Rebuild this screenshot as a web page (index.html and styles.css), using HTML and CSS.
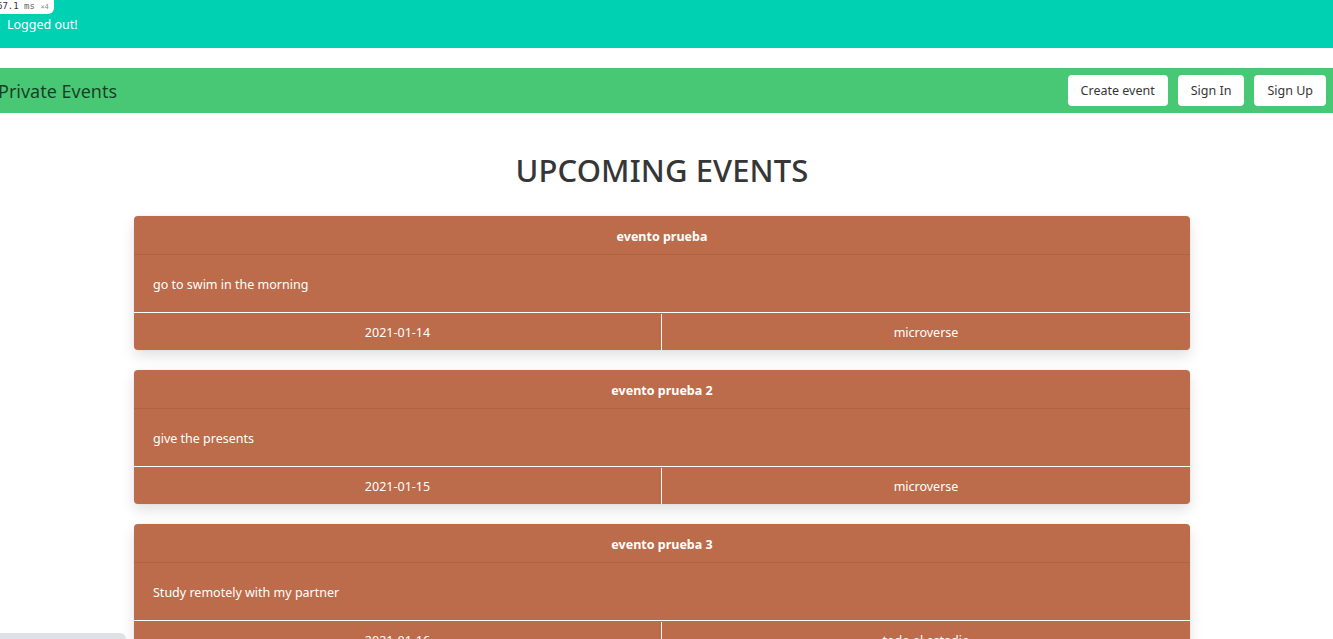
FILE: index.html
```html
<!DOCTYPE html>
<html lang="en">
<head>
<meta charset="utf-8">
<title>Private Events</title>
<link rel="stylesheet" href="styles.css">
</head>
<body>
<div class="profiler"><span class="ms">67.1</span> ms <span class="x">×4</span></div>
<div class="notice">Logged out!</div>
<nav class="navbar">
  <a class="brand" href="#">Private Events</a>
  <div class="nav-buttons">
    <a class="btn" href="#">Create event</a>
    <a class="btn" href="#">Sign In</a>
    <a class="btn" href="#">Sign Up</a>
  </div>
</nav>
<main class="main">
  <h1 class="title">UPCOMING EVENTS</h1>
  <div class="events">
    <article class="card">
      <header class="card-head">evento prueba</header>
      <div class="card-body">go to swim in the morning</div>
      <footer class="card-foot"><span>2021-01-14</span><span>microverse</span></footer>
    </article>
    <article class="card">
      <header class="card-head">evento prueba 2</header>
      <div class="card-body">give the presents</div>
      <footer class="card-foot"><span>2021-01-15</span><span>microverse</span></footer>
    </article>
    <article class="card">
      <header class="card-head">evento prueba 3</header>
      <div class="card-body">Study remotely with my partner</div>
      <footer class="card-foot"><span>2021-01-16</span><span>todo el estadio</span></footer>
    </article>
  </div>
</main>
<div class="console-tab"></div>
</body>
</html>
```
FILE: styles.css
```css
* { box-sizing: border-box; }
html, body { margin: 0; padding: 0; }
body {
  font-family: "Noto Sans", "Open Sans", sans-serif;
  color: #363636;
  background: #fff;
  overflow: hidden;
}
.profiler {
  position: absolute;
  top: 0;
  left: -3px;
  background: #fff;
  border-radius: 0 0 6px 0;
  padding: 0 5px 1px 0;
  font-family: "DejaVu Sans Mono", monospace;
  font-size: 9px;
  line-height: 12px;
  color: #666;
  z-index: 2;
}
.profiler .ms { color: #333; }
.profiler .x { color: #888; font-size: 7px; }
.notice {
  background: #00d1b2;
  color: #fff;
  height: 48px;
  padding: 16px 0 0 7px;
  font-size: 12.5px;
  line-height: 17px;
}
.navbar {
  margin-top: 20px;
  background: #48c774;
  height: 45px;
  display: flex;
  align-items: center;
  justify-content: space-between;
  padding: 0 7px 0 0;
}
.brand {
  margin-left: -2px;
  font-size: 18px;
  color: rgba(0,0,0,.7);
  text-decoration: none;
  padding-top: 1px;
}
.nav-buttons { display: flex; gap: 10px; }
.btn {
  background: #fff;
  color: #363636;
  text-decoration: none;
  border-radius: 4px;
  height: 31px;
  display: flex;
  align-items: center;
  padding: 0 13px;
  font-size: 12.5px;
}
.main { padding-right: 9px; }
.title {
  margin: 0;
  padding-top: 37px;
  text-align: center;
  font-size: 31px;
  font-weight: 500;
  line-height: 40px;
  color: #363636;
  letter-spacing: 0.1px;
}
.events {
  width: 1056px;
  margin: 26px auto 0;
  display: flex;
  flex-direction: column;
  gap: 20px;
}
.card {
  background: #bc6c4a;
  color: #fff;
  border-radius: 4px;
  box-shadow: 0 6px 14px rgba(10,10,10,.12), 0 0 0 1px rgba(10,10,10,.02);
  font-size: 12.5px;
}
.card-head {
  height: 39px;
  padding-top: 2px;
  border-bottom: 1px solid rgba(0,0,0,.08);
  display: flex;
  align-items: center;
  justify-content: center;
  font-weight: 700;
}
.card-body {
  height: 57px;
  padding: 2px 19px 0;
  display: flex;
  align-items: center;
}
.card-foot {
  height: 38px;
  padding-top: 1px;
  border-top: 1px solid #fff;
  display: grid;
  grid-template-columns: 527px 1fr;
}
.card-foot span {
  display: flex;
  align-items: center;
  justify-content: center;
}
.card-foot span + span { border-left: 1px solid #fff; }
.console-tab {
  position: fixed;
  left: 0;
  bottom: 0;
  width: 126px;
  height: 6px;
  background: #dee1e6;
  border-radius: 0 6px 0 0;
}
```
